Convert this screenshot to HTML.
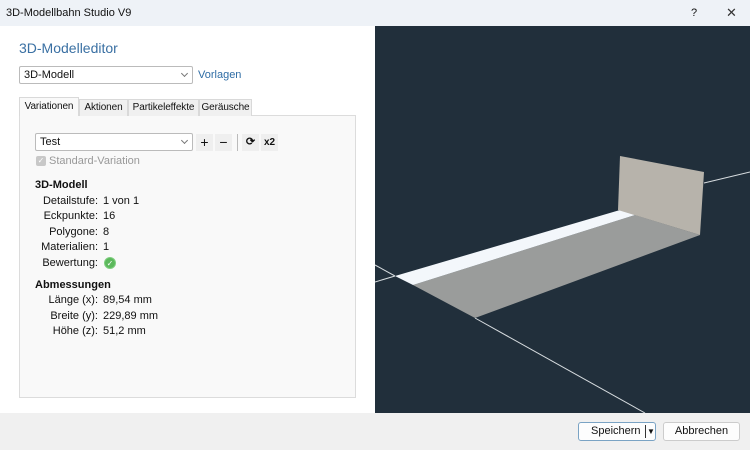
<!DOCTYPE html>
<html><head><meta charset="utf-8"><style>
*{margin:0;padding:0;box-sizing:border-box}
body{width:750px;height:450px;position:relative;overflow:hidden;font-family:"Liberation Sans",sans-serif;font-size:11px;color:#111;background:#fff}
.a{position:absolute;white-space:nowrap}
.dd{position:absolute;border:1px solid #bbb;background:#fff;border-radius:2px;padding-left:4px;line-height:16px}
.dd:after{content:"";position:absolute;right:5px;top:4px;width:4px;height:4px;border-right:1px solid #777;border-bottom:1px solid #777;transform:rotate(45deg)}
.tab{position:absolute;top:99px;height:17px;background:#f0f0f0;border:1px solid #d9d9d9;border-bottom:none;text-align:center;line-height:16px;font-size:10px;letter-spacing:-0.1px}
.lb{position:absolute;width:70px;text-align:right;left:28px}
.v{position:absolute;left:103px}
.btn{position:absolute;top:422px;height:19px;border:1px solid #ccc;background:#fdfdfd;border-radius:3px;text-align:center;line-height:17px}
.sb{position:absolute;top:134px;width:17px;height:17px;background:#efefef;text-align:center;font-weight:bold;line-height:17px}
</style></head><body>
<div class="a" style="left:0;top:0;width:750px;height:26px;background:#eef2f7"></div>
<div class="a" style="left:6px;top:7px">3D-Modellbahn Studio V9</div>
<div class="a" style="left:691px;top:7px">?</div>
<div class="a" style="left:726px;top:5px;font-size:13px;color:#333;font-weight:300">✕</div>
<div class="a" style="left:0;top:413px;width:750px;height:37px;background:#f0f0f0"></div>
<div class="a" style="left:19px;top:40px;font-size:14px;color:#3a70a3">3D-Modelleditor</div>
<div class="dd" style="left:19px;top:66px;width:174px;height:18px">3D-Modell</div>
<div class="a" style="left:198px;top:69px;color:#2f6da5">Vorlagen</div>
<div class="a" style="left:19px;top:115px;width:337px;height:283px;background:#f9f9f9;border:1px solid #dcdcdc"></div>
<div class="tab" style="left:19px;top:97px;width:60px;height:19px;background:#f9f9f9;line-height:18px">Variationen</div>
<div class="tab" style="left:79px;width:49px">Aktionen</div>
<div class="tab" style="left:128px;width:71px">Partikeleffekte</div>
<div class="tab" style="left:199px;width:53px">Geräusche</div>
<div class="dd" style="left:35px;top:133px;width:158px;height:18px">Test</div>
<div class="sb" style="left:196px;font-size:14px;font-weight:normal">+</div>
<div class="sb" style="left:215px;font-size:14px;font-weight:normal">−</div>
<div class="a" style="left:237px;top:134px;width:1px;height:17px;background:#bbb"></div>
<div class="sb" style="left:242px;font-size:11px">⟳</div>
<div class="sb" style="left:261px;font-size:10px">x2</div>
<div class="a" style="left:36px;top:156px;width:10px;height:10px;background:#c8c8c8;border-radius:2px;color:#fff;font-size:8px;line-height:10px;text-align:center">✓</div>
<div class="a" style="left:49px;top:155px;color:#999">Standard-Variation</div>
<div class="a" style="left:35px;top:179px;font-weight:bold">3D-Modell</div>
<div class="lb" style="top:195px">Detailstufe:</div><div class="v" style="top:195px">1 von 1</div>
<div class="lb" style="top:210px">Eckpunkte:</div><div class="v" style="top:210px">16</div>
<div class="lb" style="top:226px">Polygone:</div><div class="v" style="top:226px">8</div>
<div class="lb" style="top:241px">Materialien:</div><div class="v" style="top:241px">1</div>
<div class="lb" style="top:257px">Bewertung:</div>
<div class="a" style="left:104px;top:257px;width:12px;height:12px;border-radius:50%;background:#5cb85c;color:#fff;font-size:8px;line-height:12px;text-align:center;border:1px solid #7fcf7f">✓</div>
<div class="a" style="left:35px;top:279px;font-weight:bold">Abmessungen</div>
<div class="lb" style="top:294px">Länge (x):</div><div class="v" style="top:294px">89,54 mm</div>
<div class="lb" style="top:310px">Breite (y):</div><div class="v" style="top:310px">229,89 mm</div>
<div class="lb" style="top:325px">Höhe (z):</div><div class="v" style="top:325px">51,2 mm</div>
<svg class="a" style="left:375px;top:26px" width="375" height="387" viewBox="375 26 375 387">
<rect x="375" y="26" width="375" height="387" fill="#212f3b"/>
<g stroke="#d8dde0" stroke-width="1" fill="none">
<line x1="375" y1="265" x2="395" y2="276"/>
<line x1="375" y1="282" x2="395" y2="276"/>
<line x1="475" y1="318" x2="645" y2="413"/>
<line x1="704" y1="183" x2="750" y2="172"/>
</g>
<polygon points="413,285 635,215 700,235 475,318" fill="#9a9c9b"/>
<polygon points="395,276 620,210 635,215 413,285" fill="#f3f7fb"/>
<polygon points="620,156 704,172 700,235 618,210" fill="#b7b3ab"/>
</svg>
<div class="btn" style="left:578px;width:78px;border-color:#7aa3c4;text-align:left;padding-left:12px">Speichern<span style="position:absolute;left:66px;top:2px;width:1px;height:13px;background:#333"></span><span style="position:absolute;left:68px;top:0;font-size:8px">▼</span></div>
<div class="btn" style="left:663px;width:77px">Abbrechen</div>
</body></html>
